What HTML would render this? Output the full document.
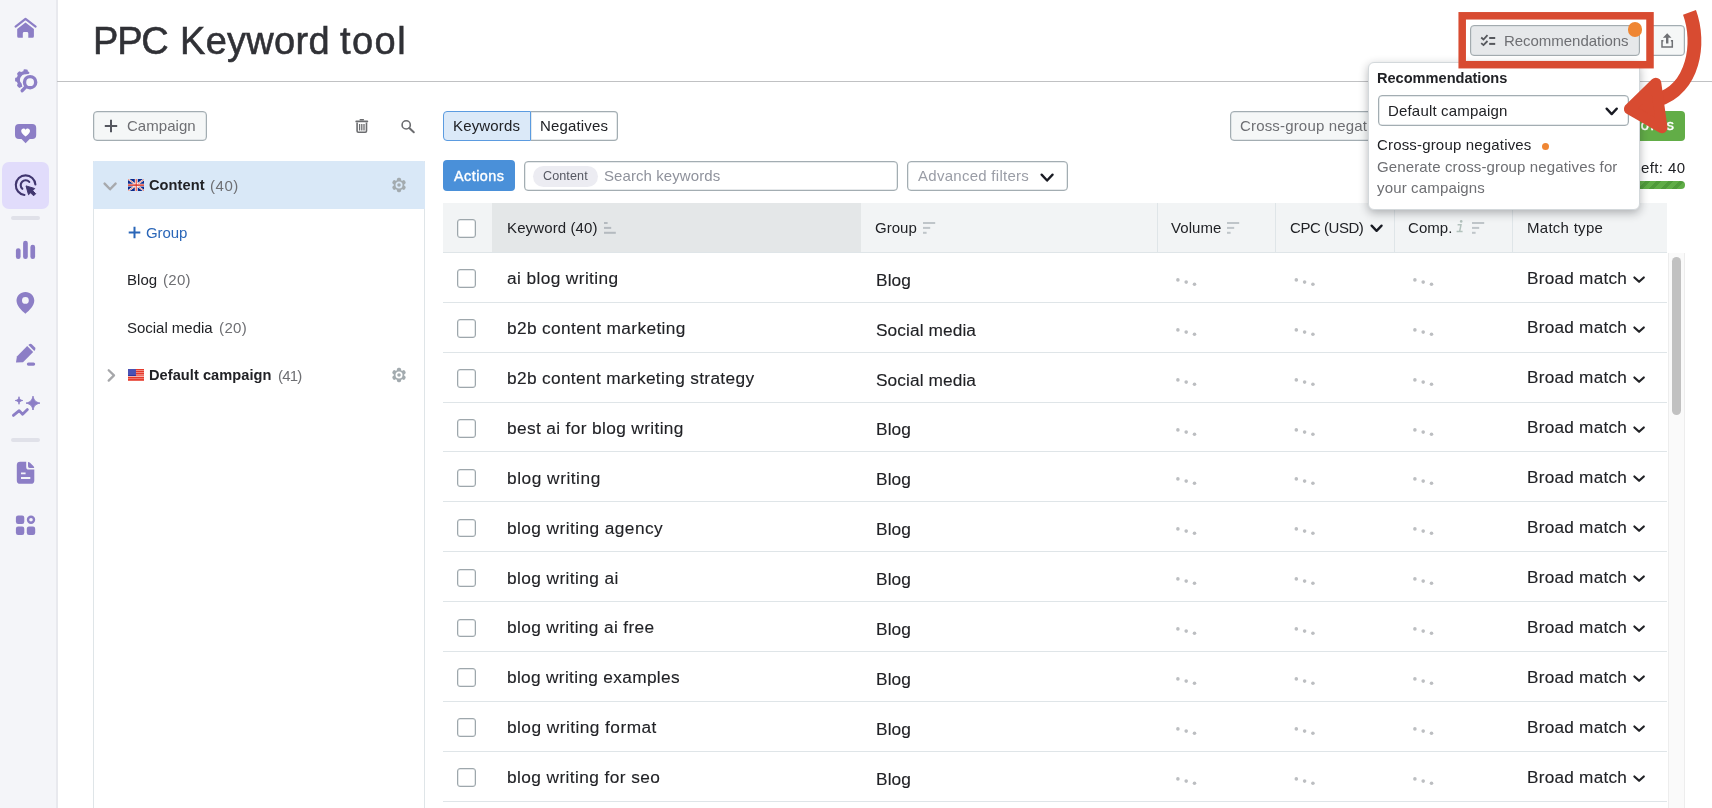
<!DOCTYPE html>
<html lang="en"><head><meta charset="utf-8"><title>PPC Keyword tool</title>
<style>
*{box-sizing:border-box;margin:0;padding:0}
html,body{width:1712px;height:808px;overflow:hidden;background:#fff}
.tx{will-change:transform}
body{font-family:"Liberation Sans",sans-serif;color:#212226;position:relative;font-size:15px}
span,div,svg{position:absolute;white-space:nowrap}
.tx{display:block}
#side{left:0;top:0;width:58px;height:808px;background:#f4f5f9;border-right:2px solid #e8e9ee}
#side .act{left:2px;top:162px;width:47px;height:47px;border-radius:7px;background:#e1dcfb}
#side .sep{left:11.3px;width:28.4px;height:3.2px;border-radius:2px;background:#e0e1e9}
#hline{left:57px;top:81px;width:1655px;height:1px;background:#c0c1c3}
.btn{border:1px solid #a3adb2;box-shadow:inset 0 0 0 .5px #cdd4d7;border-radius:4px;background:#f5f7f7}
#tree{left:93px;top:161px;width:332px;height:660px;border:1px solid #dfe5e8;border-top:none;background:#fff}
#treesel{left:93px;top:161px;width:332px;height:48px;background:#d9e8f7;border-radius:2px 2px 0 0}
#thead{left:443px;top:203px;width:1224px;height:50px;background:#f2f4f5;border-bottom:1px solid #dfe5e8}
#thead .kwh{left:49px;top:0;width:369px;height:49px;background:#e4e7e8}
#thead .vl{top:0;width:1px;height:49px;background:#dfe5e8}
.row{left:443px;width:1224px;height:49.91px;border-bottom:1px solid #dfe5e8}
.cb{width:18.6px;height:18.6px;border:1px solid #9ea7ac;border-radius:3px;background:#fff;box-shadow:inset 0 0 0 .5px #c9d0d3}
.mtc{left:1189px;top:21px}
.dots{top:25.1px;width:24px;height:10px}
.dots i{position:absolute;width:3.6px;height:3.6px;border-radius:50%;background:#bfc1c4}
.dots i:nth-child(1){left:.1px;top:0}
.dots i:nth-child(2){left:8.4px;top:2.2px}
.dots i:nth-child(3){left:16.7px;top:4.3px}

</style></head>
<body>
<div id="side">
  <div class="act"></div>
  <div class="sep" style="top:216.400px"></div>
  <div class="sep" style="top:438.400px"></div>
<svg style="left:0;top:0" width="57" height="808" viewBox="0 0 57 808">
 <g fill="#8c7ec6" stroke="none">
  <!-- home -->
  <path d="M15.6 26.6 L25.5 18.8 L35.6 26.6" fill="none" stroke="#8c7ec6" stroke-width="2.2" stroke-linecap="round" stroke-linejoin="round"/>
  <path d="M17.2 29 L25.5 22.4 L33.9 29 V36.3 Q33.9 37.8 32.4 37.8 H28.3 V33.4 Q28.3 32 26.9 32 H24.2 Q22.8 32 22.8 33.4 V37.8 H18.7 Q17.2 37.8 17.2 36.3 Z"/>
  <!-- gear + search -->
  <path d="M27.69 73.02 A7 7 0 0 0 21.28 85.33" fill="none" stroke="#8c7ec6" stroke-width="3.4" stroke-linecap="round"/>
  <rect x="23.10" y="69.40" width="4.4" height="4.6" rx="1.3" transform="rotate(2 25.3 79.6)"/><rect x="23.10" y="69.40" width="4.4" height="4.6" rx="1.3" transform="rotate(-45 25.3 79.6)"/><rect x="23.10" y="69.40" width="4.4" height="4.6" rx="1.3" transform="rotate(-90 25.3 79.6)"/><rect x="23.10" y="69.40" width="4.4" height="4.6" rx="1.3" transform="rotate(-135 25.3 79.6)"/>
  <circle cx="30.1" cy="82.2" r="8.7" fill="#f4f5f9"/>
  <circle cx="30.1" cy="82.2" r="5.6" fill="none" stroke="#8c7ec6" stroke-width="3.4"/>
  <path d="M25.8 86.8 L22.2 90.7" fill="none" stroke="#8c7ec6" stroke-width="3.4" stroke-linecap="round"/>
  <!-- heart bubble -->
  <path d="M19 123.900 H32.200 Q36.200 123.900 36.200 127.900 V135 Q36.200 139 32.200 139 H29.700 L25.600 143.300 L21.500 139 H19 Q15 139 15 135 V127.900 Q15 123.900 19 123.900 Z"/>
  <path d="M25.600 136.400 C22.700 134.200 21.200 132.700 21.200 130.900 C21.200 129.400 22.300 128.500 23.500 128.500 C24.400 128.500 25.100 128.900 25.600 129.800 C26.100 128.900 26.800 128.500 27.700 128.500 C28.900 128.500 30 129.400 30 130.900 C30 132.700 28.500 134.200 25.600 136.400 Z" fill="#fff"/>
  <!-- bars -->
  <rect x="15.9" y="248.2" width="4.7" height="10.8" rx="2.3"/>
  <rect x="23.1" y="240.8" width="4.7" height="18.2" rx="2.3"/>
  <rect x="30.4" y="244.8" width="4.7" height="14.2" rx="2.3"/>
  <!-- pin -->
  <path d="M25.4 291.9 C30.4 291.9 34.3 295.8 34.3 300.6 C34.3 305.6 29.6 310.4 25.4 313.8 C21.2 310.4 16.5 305.6 16.5 300.6 C16.5 295.8 20.4 291.9 25.4 291.9 Z M25.4 297 A3.4 3.4 0 1 0 25.4 303.8 A3.4 3.4 0 1 0 25.4 297 Z" fill-rule="evenodd"/>
  <!-- pencil -->
  <path d="M16 362.6 L16.9 356.4 L27.2 346.1 L33.2 352.1 L23 362.2 Z"/>
  <path d="M28.4 344.9 L29.2 344.2 Q30.6 343.2 32 344.4 L35 347.4 Q36 348.8 35 350.1 L34.3 350.9 Z"/>
  <rect x="26.8" y="362.4" width="8.4" height="3.4" rx="1.7"/>
  <!-- sparkle chart -->
  <path d="M33 396.2 C34 400.6 35.4 402 39.9 403.1 C35.400 404.2 34 405.600 33 410 C32 405.600 30.600 404.2 26.100 403.100 C30.600 402 32 400.600 33 396.2 Z" stroke="#8c7ec6" stroke-width="1" stroke-linejoin="round"/>
  <path d="M19 396.700 C19.500 399.300 20.200 400 22.800 400.500 C20.200 401 19.500 401.700 19 404.300 C18.500 401.700 17.800 401 15.200 400.500 C17.800 400 18.500 399.300 19 396.700 Z" stroke="#8c7ec6" stroke-width="0.800" stroke-linejoin="round"/>
  <path d="M13.4 415.400 L19.200 410.6 L22.6 414.2 L27.4 409.600" fill="none" stroke="#8c7ec6" stroke-width="2.800" stroke-linecap="round" stroke-linejoin="round"/>
  <!-- doc -->
  <path d="M20.200 461.700 H26.200 V467 Q26.200 469.600 28.800 469.600 H34.300 V480.400 Q34.300 483.800 30.900 483.800 H20.200 Q16.800 483.800 16.800 480.400 V465.100 Q16.800 461.700 20.200 461.700 Z M21 472.400 V474.300 H25.600 V472.400 Z M21 477 V478.900 H30.300 V477 Z" fill-rule="evenodd"/>
  <path d="M28 461.900 Q29.200 462 30 462.800 L33.300 466.100 Q34.100 466.900 34.200 467.900 H29.600 Q28 467.900 28 466.300 Z"/>
  <!-- apps -->
  <rect x="15.900" y="515.500" width="8.400" height="8.400" rx="2.200"/>
  <rect x="15.900" y="526.500" width="8.400" height="8.400" rx="2.200"/>
  <rect x="26.800" y="526.500" width="8.400" height="8.400" rx="2.200"/>
  <circle cx="31" cy="519.700" r="3" fill="none" stroke="#8c7ec6" stroke-width="2.400"/>
 </g>
 <!-- active target -->
 <g fill="none" stroke="#41366f" stroke-width="2.1" stroke-linecap="round">
  <path d="M24.41 194.93 A9.8 9.8 0 1 1 35.38 184.52"/>
  <path d="M22.32 188.84 A4.9 4.9 0 1 1 29.24 181.92"/>
 </g>
 <path d="M26 185.900 L34.700 188.500 L32.700 190.700 L35.700 193.700 L33.600 195.800 L30.600 192.800 L28.500 194.700 Z" fill="#41366f" stroke="#41366f" stroke-width="1" stroke-linejoin="round"/>
</svg>
</div>
<div id="hline"></div>

<!-- left column -->
<div class="btn" style="left:93px;top:110.500px;width:113.500px;height:30.500px"></div>
<svg style="left:104px;top:119px" width="14" height="14" viewBox="0 0 14 14"><path d="M7 0.800 V13.200 M0.800 7 H13.200" stroke="#55575f" stroke-width="2" fill="none"/></svg>
<!-- trash -->
<svg style="left:354px;top:118px" width="16" height="16" viewBox="0 0 16 16"><g fill="none" stroke="#6b6c6f"><path d="M6.300 1.800 H9.300" stroke-width="1.600" stroke-linecap="round"/><path d="M2.300 3.400 H13.300" stroke-width="1.900" stroke-linecap="round"/><path d="M3.100 4.600 V13 Q3.100 14.200 4.300 14.200 H11.300 Q12.500 14.200 12.500 13 V4.600" stroke-width="1.600"/><path d="M5.600 6 V12.400 M7.800 6 V12.400 M10 6 V12.400" stroke-width="1.300"/></g></svg>
<!-- search -->
<svg style="left:399px;top:118px" width="18" height="18" viewBox="0 0 18 18"><circle cx="7.200" cy="6.900" r="4.100" fill="none" stroke="#6b6c6f" stroke-width="1.600"/><path d="M10.300 10 L14.800 14.300" stroke="#6b6c6f" stroke-width="2" stroke-linecap="round"/></svg>
<div id="tree"></div>
<div id="treesel"></div>
<svg style="left:102.1px;top:180.6px" width="16.2" height="11.2" viewBox="-2 -2 16.2 11.2"><path d="M0.6 0.6 L6.1 6.3 L11.6 0.6" fill="none" stroke="#a7a9ad" stroke-width="2.400" stroke-linecap="round" stroke-linejoin="round"/></svg>
<!-- UK flag -->
<svg style="left:127.500px;top:179.200px" width="16.500" height="12.200" viewBox="0 0 60 44" preserveAspectRatio="none"><rect width="60" height="44" fill="#0a2a8c"/><path d="M0 0 L60 44 M60 0 L0 44" stroke="#fff" stroke-width="6.500"/><path d="M0 0 L60 44 M60 0 L0 44" stroke="#e0452f" stroke-width="2.200"/><path d="M30 0 V44 M0 22 H60" stroke="#fff" stroke-width="10.500"/><path d="M30 0 V44" stroke="#ee6a5a" stroke-width="5"/><path d="M0 22 H60" stroke="#d52b1e" stroke-width="5"/></svg>
<svg style="left:391.15px;top:177.2px" width="16" height="16" viewBox="-8 -8 16 16"><g fill="#a3abaf"><rect x="-2.1" y="-7.2" width="4.2" height="5" rx="1.6" transform="rotate(0)"/><rect x="-2.1" y="-7.2" width="4.2" height="5" rx="1.6" transform="rotate(60)"/><rect x="-2.1" y="-7.2" width="4.2" height="5" rx="1.6" transform="rotate(120)"/><rect x="-2.1" y="-7.2" width="4.2" height="5" rx="1.6" transform="rotate(180)"/><rect x="-2.1" y="-7.2" width="4.2" height="5" rx="1.6" transform="rotate(240)"/><rect x="-2.1" y="-7.2" width="4.2" height="5" rx="1.6" transform="rotate(300)"/><circle r="5.2"/></g><circle r="3.4" fill="none" stroke="#dce9f6" stroke-width="0"/><circle r="3.5" fill="#d9e8f7"/><circle r="1.8" fill="#a3abaf"/></svg>
<svg style="left:128px;top:226px" width="13" height="13" viewBox="0 0 13 13"><path d="M6.500 0.700 V12.300 M0.700 6.500 H12.300" stroke="#2a66b8" stroke-width="2" fill="none"/></svg>
<!-- chevron right -->
<svg style="left:105px;top:367px" width="12" height="16" viewBox="0 0 12 16"><path d="M3.700 3.200 L9 8.400 L3.700 13.600" fill="none" stroke="#a6a7aa" stroke-width="2.300" stroke-linecap="round" stroke-linejoin="round"/></svg>
<!-- US flag -->
<svg style="left:127.600px;top:369.100px" width="16.400" height="12.400" viewBox="0 0 33 24" preserveAspectRatio="none"><rect width="33" height="24" fill="#f39a90"/><g fill="#e5392c"><rect y="0" width="33" height="2.200"/><rect y="3.900" width="33" height="2.200"/><rect y="7.700" width="33" height="2.400"/><rect y="11.500" width="33" height="1.600"/><rect y="15.200" width="33" height="2.400"/><rect y="18.800" width="33" height="2.400"/><rect y="22.200" width="33" height="1.800"/></g><rect y="13.100" width="33" height="1.500" fill="#fbd5cf"/><rect width="16" height="13.200" fill="#4a52b4"/><rect y="11.800" width="16" height="1.400" fill="#1f2a9c"/></svg>
<svg style="left:391.15px;top:367.3px" width="16" height="16" viewBox="-8 -8 16 16"><g fill="#a3abaf"><rect x="-2.1" y="-7.2" width="4.2" height="5" rx="1.6" transform="rotate(0)"/><rect x="-2.1" y="-7.2" width="4.2" height="5" rx="1.6" transform="rotate(60)"/><rect x="-2.1" y="-7.2" width="4.2" height="5" rx="1.6" transform="rotate(120)"/><rect x="-2.1" y="-7.2" width="4.2" height="5" rx="1.6" transform="rotate(180)"/><rect x="-2.1" y="-7.2" width="4.2" height="5" rx="1.6" transform="rotate(240)"/><rect x="-2.1" y="-7.2" width="4.2" height="5" rx="1.6" transform="rotate(300)"/><circle r="5.2"/></g><circle r="3.4" fill="none" stroke="#dce9f6" stroke-width="0"/><circle r="3.5" fill="#ffffff"/><circle r="1.8" fill="#a3abaf"/></svg>

<!-- tabs -->
<div style="left:443px;top:110.500px;width:88px;height:30.500px;border:1px solid #5b9be0;border-radius:4px 0 0 4px;background:#dbe9f8"></div>
<div style="left:530.500px;top:110.500px;width:87.500px;height:30.500px;border:1px solid #a3adb2;box-shadow:inset 0 0 0 .5px #cdd4d7;border-left:none;border-radius:0 4px 4px 0;background:#fff"></div>

<!-- actions/search -->
<div style="left:443px;top:160px;width:72px;height:31px;border-radius:4px;background:#4a90d9"></div>
<div style="left:524.300px;top:160.500px;width:373.400px;height:30.500px;border:1px solid #a3adb2;box-shadow:inset 0 0 0 .5px #cdd4d7;border-radius:4px;background:#fff"></div>
<div style="left:532.800px;top:165.500px;width:65.500px;height:21px;border-radius:10.500px;background:#ececf2"></div>
<div style="left:907.300px;top:160.500px;width:160.400px;height:30.500px;border:1px solid #a3adb2;box-shadow:inset 0 0 0 .5px #cdd4d7;border-radius:4px;background:#fff"></div>
<svg style="left:1038.9px;top:171.7px" width="16.2" height="11.5" viewBox="-2 -2 16.2 11.5"><path d="M0.6 0.6 L6.1 6.6 L11.6 0.6" fill="none" stroke="#191b23" stroke-width="2.300" stroke-linecap="round" stroke-linejoin="round"/></svg>

<!-- right controls -->
<div class="btn" style="left:1230.200px;top:110.500px;width:170px;height:30.500px"></div>
<div style="left:1590px;top:110.500px;width:94.800px;height:30.400px;border-radius:4px;background:#62ad47"></div>
<div style="left:1560px;top:181px;width:124.700px;height:8.400px;border-radius:4.200px;background:repeating-linear-gradient(135deg,#5fad46 0 4.500px,#4f9b3a 4.500px 8px)"></div>

<!-- table -->
<div id="thead">
  <div class="kwh"></div>
  <span class="cb" style="left:14.4px;top:16.2px"></span>
  <div class="vl" style="left:713.500px"></div>
  <div class="vl" style="left:832px"></div>
  <div class="vl" style="left:950.500px"></div>
  <div class="vl" style="left:1069.300px"></div>
</div>
<svg style="left:604.3px;top:222.2px" width="13" height="12" viewBox="0 0 13 12"><g fill="#b4babf"><rect x="0" y="0" width="3.6" height="2"/><rect x="0" y="4.9" width="7.2" height="2"/><rect x="0" y="9.8" width="11.8" height="2"/></g></svg>
<svg style="left:923.3px;top:221.9px" width="13" height="12" viewBox="0 0 13 12"><g fill="#bfc5c9"><rect x="0" y="0" width="12.2" height="2"/><rect x="0" y="4.9" width="7.2" height="2"/><rect x="0" y="9.8" width="3.6" height="2"/></g></svg>
<svg style="left:1227px;top:222.2px" width="13" height="12" viewBox="0 0 13 12"><g fill="#bfc5c9"><rect x="0" y="0" width="12.2" height="2"/><rect x="0" y="4.9" width="7.2" height="2"/><rect x="0" y="9.8" width="3.6" height="2"/></g></svg>
<svg style="left:1369.3px;top:223.2px" width="15.2" height="10.8" viewBox="-2 -2 15.2 10.8"><path d="M0.6 0.6 L5.6 5.8999999999999995 L10.6 0.6" fill="none" stroke="#191b23" stroke-width="2.300" stroke-linecap="round" stroke-linejoin="round"/></svg>
<svg style="left:1455px;top:219px" width="10" height="15" viewBox="0 0 10 15"><circle cx="6.200" cy="2.400" r="1.300" fill="#b3c2bd"/><path d="M2.600 5.800 H6 L4.600 12.600 H7.400 M1.600 12.600 H7.600" fill="none" stroke="#b3c2bd" stroke-width="1.500"/></svg>
<svg style="left:1471.8px;top:222.2px" width="13" height="12" viewBox="0 0 13 12"><g fill="#bfc5c9"><rect x="0" y="0" width="12.2" height="2"/><rect x="0" y="4.9" width="7.2" height="2"/><rect x="0" y="9.8" width="3.6" height="2"/></g></svg>
<div class="row" style="top:252.80px"><span class="cb" style="left:14.4px;top:16.4px"></span>
<svg style="left:730px;top:22px" width="270" height="14" viewBox="0 0 270 14" fill="#bcbec1"><circle cx="4.9" cy="4.9" r="1.8"/><circle cx="13.2" cy="7.1" r="1.8"/><circle cx="21.5" cy="9.2" r="1.8"/><circle cx="123.3" cy="4.9" r="1.8"/><circle cx="131.6" cy="7.1" r="1.8"/><circle cx="139.9" cy="9.2" r="1.8"/><circle cx="241.9" cy="4.9" r="1.8"/><circle cx="250.2" cy="7.1" r="1.8"/><circle cx="258.5" cy="9.2" r="1.8"/></svg>
<svg class="mtc" width="14" height="10" viewBox="0 0 14 10"><path d="M2.4 3.5 L7.1 7.8 L11.8 3.5" fill="none" stroke="#212226" stroke-width="2.2" stroke-linecap="round" stroke-linejoin="round"/></svg></div>
<div class="row" style="top:302.71px"><span class="cb" style="left:14.4px;top:16.4px"></span>
<svg style="left:730px;top:22px" width="270" height="14" viewBox="0 0 270 14" fill="#bcbec1"><circle cx="4.9" cy="4.9" r="1.8"/><circle cx="13.2" cy="7.1" r="1.8"/><circle cx="21.5" cy="9.2" r="1.8"/><circle cx="123.3" cy="4.9" r="1.8"/><circle cx="131.6" cy="7.1" r="1.8"/><circle cx="139.9" cy="9.2" r="1.8"/><circle cx="241.9" cy="4.9" r="1.8"/><circle cx="250.2" cy="7.1" r="1.8"/><circle cx="258.5" cy="9.2" r="1.8"/></svg>
<svg class="mtc" width="14" height="10" viewBox="0 0 14 10"><path d="M2.4 3.5 L7.1 7.8 L11.8 3.5" fill="none" stroke="#212226" stroke-width="2.2" stroke-linecap="round" stroke-linejoin="round"/></svg></div>
<div class="row" style="top:352.62px"><span class="cb" style="left:14.4px;top:16.4px"></span>
<svg style="left:730px;top:22px" width="270" height="14" viewBox="0 0 270 14" fill="#bcbec1"><circle cx="4.9" cy="4.9" r="1.8"/><circle cx="13.2" cy="7.1" r="1.8"/><circle cx="21.5" cy="9.2" r="1.8"/><circle cx="123.3" cy="4.9" r="1.8"/><circle cx="131.6" cy="7.1" r="1.8"/><circle cx="139.9" cy="9.2" r="1.8"/><circle cx="241.9" cy="4.9" r="1.8"/><circle cx="250.2" cy="7.1" r="1.8"/><circle cx="258.5" cy="9.2" r="1.8"/></svg>
<svg class="mtc" width="14" height="10" viewBox="0 0 14 10"><path d="M2.4 3.5 L7.1 7.8 L11.8 3.5" fill="none" stroke="#212226" stroke-width="2.2" stroke-linecap="round" stroke-linejoin="round"/></svg></div>
<div class="row" style="top:402.53px"><span class="cb" style="left:14.4px;top:16.4px"></span>
<svg style="left:730px;top:22px" width="270" height="14" viewBox="0 0 270 14" fill="#bcbec1"><circle cx="4.9" cy="4.9" r="1.8"/><circle cx="13.2" cy="7.1" r="1.8"/><circle cx="21.5" cy="9.2" r="1.8"/><circle cx="123.3" cy="4.9" r="1.8"/><circle cx="131.6" cy="7.1" r="1.8"/><circle cx="139.9" cy="9.2" r="1.8"/><circle cx="241.9" cy="4.9" r="1.8"/><circle cx="250.2" cy="7.1" r="1.8"/><circle cx="258.5" cy="9.2" r="1.8"/></svg>
<svg class="mtc" width="14" height="10" viewBox="0 0 14 10"><path d="M2.4 3.5 L7.1 7.8 L11.8 3.5" fill="none" stroke="#212226" stroke-width="2.2" stroke-linecap="round" stroke-linejoin="round"/></svg></div>
<div class="row" style="top:452.44px"><span class="cb" style="left:14.4px;top:16.4px"></span>
<svg style="left:730px;top:22px" width="270" height="14" viewBox="0 0 270 14" fill="#bcbec1"><circle cx="4.9" cy="4.9" r="1.8"/><circle cx="13.2" cy="7.1" r="1.8"/><circle cx="21.5" cy="9.2" r="1.8"/><circle cx="123.3" cy="4.9" r="1.8"/><circle cx="131.6" cy="7.1" r="1.8"/><circle cx="139.9" cy="9.2" r="1.8"/><circle cx="241.9" cy="4.9" r="1.8"/><circle cx="250.2" cy="7.1" r="1.8"/><circle cx="258.5" cy="9.2" r="1.8"/></svg>
<svg class="mtc" width="14" height="10" viewBox="0 0 14 10"><path d="M2.4 3.5 L7.1 7.8 L11.8 3.5" fill="none" stroke="#212226" stroke-width="2.2" stroke-linecap="round" stroke-linejoin="round"/></svg></div>
<div class="row" style="top:502.35px"><span class="cb" style="left:14.4px;top:16.4px"></span>
<svg style="left:730px;top:22px" width="270" height="14" viewBox="0 0 270 14" fill="#bcbec1"><circle cx="4.9" cy="4.9" r="1.8"/><circle cx="13.2" cy="7.1" r="1.8"/><circle cx="21.5" cy="9.2" r="1.8"/><circle cx="123.3" cy="4.9" r="1.8"/><circle cx="131.6" cy="7.1" r="1.8"/><circle cx="139.9" cy="9.2" r="1.8"/><circle cx="241.9" cy="4.9" r="1.8"/><circle cx="250.2" cy="7.1" r="1.8"/><circle cx="258.5" cy="9.2" r="1.8"/></svg>
<svg class="mtc" width="14" height="10" viewBox="0 0 14 10"><path d="M2.4 3.5 L7.1 7.8 L11.8 3.5" fill="none" stroke="#212226" stroke-width="2.2" stroke-linecap="round" stroke-linejoin="round"/></svg></div>
<div class="row" style="top:552.26px"><span class="cb" style="left:14.4px;top:16.4px"></span>
<svg style="left:730px;top:22px" width="270" height="14" viewBox="0 0 270 14" fill="#bcbec1"><circle cx="4.9" cy="4.9" r="1.8"/><circle cx="13.2" cy="7.1" r="1.8"/><circle cx="21.5" cy="9.2" r="1.8"/><circle cx="123.3" cy="4.9" r="1.8"/><circle cx="131.6" cy="7.1" r="1.8"/><circle cx="139.9" cy="9.2" r="1.8"/><circle cx="241.9" cy="4.9" r="1.8"/><circle cx="250.2" cy="7.1" r="1.8"/><circle cx="258.5" cy="9.2" r="1.8"/></svg>
<svg class="mtc" width="14" height="10" viewBox="0 0 14 10"><path d="M2.4 3.5 L7.1 7.8 L11.8 3.5" fill="none" stroke="#212226" stroke-width="2.2" stroke-linecap="round" stroke-linejoin="round"/></svg></div>
<div class="row" style="top:602.17px"><span class="cb" style="left:14.4px;top:16.4px"></span>
<svg style="left:730px;top:22px" width="270" height="14" viewBox="0 0 270 14" fill="#bcbec1"><circle cx="4.9" cy="4.9" r="1.8"/><circle cx="13.2" cy="7.1" r="1.8"/><circle cx="21.5" cy="9.2" r="1.8"/><circle cx="123.3" cy="4.9" r="1.8"/><circle cx="131.6" cy="7.1" r="1.8"/><circle cx="139.9" cy="9.2" r="1.8"/><circle cx="241.9" cy="4.9" r="1.8"/><circle cx="250.2" cy="7.1" r="1.8"/><circle cx="258.5" cy="9.2" r="1.8"/></svg>
<svg class="mtc" width="14" height="10" viewBox="0 0 14 10"><path d="M2.4 3.5 L7.1 7.8 L11.8 3.5" fill="none" stroke="#212226" stroke-width="2.2" stroke-linecap="round" stroke-linejoin="round"/></svg></div>
<div class="row" style="top:652.08px"><span class="cb" style="left:14.4px;top:16.4px"></span>
<svg style="left:730px;top:22px" width="270" height="14" viewBox="0 0 270 14" fill="#bcbec1"><circle cx="4.9" cy="4.9" r="1.8"/><circle cx="13.2" cy="7.1" r="1.8"/><circle cx="21.5" cy="9.2" r="1.8"/><circle cx="123.3" cy="4.9" r="1.8"/><circle cx="131.6" cy="7.1" r="1.8"/><circle cx="139.9" cy="9.2" r="1.8"/><circle cx="241.9" cy="4.9" r="1.8"/><circle cx="250.2" cy="7.1" r="1.8"/><circle cx="258.5" cy="9.2" r="1.8"/></svg>
<svg class="mtc" width="14" height="10" viewBox="0 0 14 10"><path d="M2.4 3.5 L7.1 7.8 L11.8 3.5" fill="none" stroke="#212226" stroke-width="2.2" stroke-linecap="round" stroke-linejoin="round"/></svg></div>
<div class="row" style="top:701.99px"><span class="cb" style="left:14.4px;top:16.4px"></span>
<svg style="left:730px;top:22px" width="270" height="14" viewBox="0 0 270 14" fill="#bcbec1"><circle cx="4.9" cy="4.9" r="1.8"/><circle cx="13.2" cy="7.1" r="1.8"/><circle cx="21.5" cy="9.2" r="1.8"/><circle cx="123.3" cy="4.9" r="1.8"/><circle cx="131.6" cy="7.1" r="1.8"/><circle cx="139.9" cy="9.2" r="1.8"/><circle cx="241.9" cy="4.9" r="1.8"/><circle cx="250.2" cy="7.1" r="1.8"/><circle cx="258.5" cy="9.2" r="1.8"/></svg>
<svg class="mtc" width="14" height="10" viewBox="0 0 14 10"><path d="M2.4 3.5 L7.1 7.8 L11.8 3.5" fill="none" stroke="#212226" stroke-width="2.2" stroke-linecap="round" stroke-linejoin="round"/></svg></div>
<div class="row" style="top:751.90px"><span class="cb" style="left:14.4px;top:16.4px"></span>
<svg style="left:730px;top:22px" width="270" height="14" viewBox="0 0 270 14" fill="#bcbec1"><circle cx="4.9" cy="4.9" r="1.8"/><circle cx="13.2" cy="7.1" r="1.8"/><circle cx="21.5" cy="9.2" r="1.8"/><circle cx="123.3" cy="4.9" r="1.8"/><circle cx="131.6" cy="7.1" r="1.8"/><circle cx="139.9" cy="9.2" r="1.8"/><circle cx="241.9" cy="4.9" r="1.8"/><circle cx="250.2" cy="7.1" r="1.8"/><circle cx="258.5" cy="9.2" r="1.8"/></svg>
<svg class="mtc" width="14" height="10" viewBox="0 0 14 10"><path d="M2.4 3.5 L7.1 7.8 L11.8 3.5" fill="none" stroke="#212226" stroke-width="2.2" stroke-linecap="round" stroke-linejoin="round"/></svg></div>
<div style="left:1667.500px;top:253px;width:17px;height:555px;background:#fafafa;border-left:1px solid #ededed;border-right:1px solid #ededed"></div>
<div style="left:1672.200px;top:256.500px;width:9px;height:158.700px;border-radius:4.500px;background:#c1c1c1"></div>
<h1 style="position:absolute;left:0;top:0;width:0;height:0;font-weight:400;font-size:inherit"><span class="tx" style="top:21.93px;font-size:38px;line-height:38px;letter-spacing:-1.21px;color:#303136;left:93.21px;-webkit-text-stroke:.55px #303136;">PPC</span> <span class="tx" style="top:21.93px;font-size:38px;line-height:38px;letter-spacing:0.296px;color:#303136;left:179.61px;-webkit-text-stroke:.55px #303136;">Keyword</span> <span class="tx" style="top:21.93px;font-size:38px;line-height:38px;letter-spacing:1.446px;color:#303136;left:339.51px;-webkit-text-stroke:.55px #303136;">tool</span></h1>
<span class="tx" style="top:118.40px;font-size:15px;line-height:15px;letter-spacing:0.039px;color:#6e6f73;left:126.97px;">Campaign</span>
<span class="tx" style="top:177.84px;font-size:14.6px;line-height:14.6px;letter-spacing:0.081px;color:#212226;font-weight:700;left:148.60px;">Content</span>
<span class="tx" style="top:177.50px;font-size:15px;line-height:15px;letter-spacing:0.521px;color:#6e6f73;left:210.18px;">(40)</span>
<span class="tx" style="top:225.20px;font-size:15px;line-height:15px;letter-spacing:-0.088px;color:#2a66b8;left:146.18px;">Group</span>
<span class="tx" style="top:272.10px;font-size:15px;line-height:15px;letter-spacing:0.04px;color:#212226;left:126.88px;">Blog</span>
<span class="tx" style="top:272.10px;font-size:15px;line-height:15px;letter-spacing:0.288px;color:#6e6f73;left:163.38px;">(20)</span>
<span class="tx" style="top:320.30px;font-size:15px;line-height:15px;letter-spacing:-0.022px;color:#212226;left:126.88px;">Social media</span>
<span class="tx" style="top:320.30px;font-size:15px;line-height:15px;letter-spacing:0.388px;color:#6e6f73;left:218.68px;">(20)</span>
<span class="tx" style="top:368.14px;font-size:14.6px;line-height:14.6px;letter-spacing:0.052px;color:#212226;font-weight:700;left:148.60px;">Default campaign</span>
<span class="tx" style="top:367.80px;font-size:15px;line-height:15px;letter-spacing:-0.812px;color:#6e6f73;left:277.68px;">(41)</span>
<span class="tx" style="top:118.10px;font-size:15px;line-height:15px;letter-spacing:0.17px;color:#212226;left:453.18px;">Keywords</span>
<span class="tx" style="top:118.10px;font-size:15px;line-height:15px;letter-spacing:0.156px;color:#212226;left:539.57px;">Negatives</span>
<span class="tx" style="top:169.31px;font-size:14.4px;line-height:14.4px;letter-spacing:0.449px;color:#fff;left:454.11px;-webkit-text-stroke:.4px #fff;">Actions</span>
<span class="tx" style="top:169.83px;font-size:12.6px;line-height:12.6px;letter-spacing:0.087px;color:#565862;left:543.01px;">Content</span>
<span class="tx" style="top:168.30px;font-size:15px;line-height:15px;letter-spacing:0.078px;color:#8f929c;left:603.88px;">Search keywords</span>
<span class="tx" style="top:168.00px;font-size:15px;line-height:15px;letter-spacing:0.274px;color:#9a9da6;left:917.67px;">Advanced filters</span>
<span class="tx" style="top:220.00px;font-size:15px;line-height:15px;letter-spacing:0.122px;color:#212226;left:507.38px;">Keyword (40)</span>
<span class="tx" style="top:220.00px;font-size:15px;line-height:15px;letter-spacing:0.037px;color:#212226;left:875.47px;">Group</span>
<span class="tx" style="top:220.00px;font-size:15px;line-height:15px;letter-spacing:0.061px;color:#212226;left:1171.17px;">Volume</span>
<span class="tx" style="top:220.00px;font-size:15px;line-height:15px;letter-spacing:-0.456px;color:#212226;left:1289.58px;">CPC (USD)</span>
<span class="tx" style="top:220.00px;font-size:15px;line-height:15px;letter-spacing:0.066px;color:#212226;left:1408.38px;">Comp.</span>
<span class="tx" style="top:220.00px;font-size:15px;line-height:15px;letter-spacing:0.275px;color:#212226;left:1526.77px;">Match type</span>
<span class="tx" style="top:270.06px;font-size:17.3px;line-height:17.3px;letter-spacing:0.392px;color:#212226;left:506.55px;-webkit-text-stroke:.12px #212226;">ai blog writing</span>
<span class="tx" style="top:271.76px;font-size:17.3px;line-height:17.3px;letter-spacing:0.121px;color:#212226;left:875.75px;height:16.84px;overflow:hidden;-webkit-text-stroke:.12px #212226;">Blog</span>
<span class="tx" style="top:269.54px;font-size:17.2px;line-height:17.2px;letter-spacing:0.239px;color:#212226;left:1526.65px;-webkit-text-stroke:.12px #212226;">Broad match</span>
<span class="tx" style="top:319.97px;font-size:17.3px;line-height:17.3px;letter-spacing:0.368px;color:#212226;left:506.55px;-webkit-text-stroke:.12px #212226;">b2b content marketing</span>
<span class="tx" style="top:321.67px;font-size:17.3px;line-height:17.3px;letter-spacing:0.093px;color:#212226;left:875.75px;height:16.84px;overflow:hidden;-webkit-text-stroke:.12px #212226;">Social media</span>
<span class="tx" style="top:319.45px;font-size:17.2px;line-height:17.2px;letter-spacing:0.239px;color:#212226;left:1526.65px;-webkit-text-stroke:.12px #212226;">Broad match</span>
<span class="tx" style="top:369.88px;font-size:17.3px;line-height:17.3px;letter-spacing:0.337px;color:#212226;left:506.55px;-webkit-text-stroke:.12px #212226;">b2b content marketing strategy</span>
<span class="tx" style="top:371.58px;font-size:17.3px;line-height:17.3px;letter-spacing:0.093px;color:#212226;left:875.75px;height:16.84px;overflow:hidden;-webkit-text-stroke:.12px #212226;">Social media</span>
<span class="tx" style="top:369.36px;font-size:17.2px;line-height:17.2px;letter-spacing:0.239px;color:#212226;left:1526.65px;-webkit-text-stroke:.12px #212226;">Broad match</span>
<span class="tx" style="top:419.79px;font-size:17.3px;line-height:17.3px;letter-spacing:0.363px;color:#212226;left:506.55px;-webkit-text-stroke:.12px #212226;">best ai for blog writing</span>
<span class="tx" style="top:421.49px;font-size:17.3px;line-height:17.3px;letter-spacing:0.121px;color:#212226;left:875.75px;height:16.84px;overflow:hidden;-webkit-text-stroke:.12px #212226;">Blog</span>
<span class="tx" style="top:419.27px;font-size:17.2px;line-height:17.2px;letter-spacing:0.239px;color:#212226;left:1526.65px;-webkit-text-stroke:.12px #212226;">Broad match</span>
<span class="tx" style="top:469.70px;font-size:17.3px;line-height:17.3px;letter-spacing:0.53px;color:#212226;left:506.55px;-webkit-text-stroke:.12px #212226;">blog writing</span>
<span class="tx" style="top:471.40px;font-size:17.3px;line-height:17.3px;letter-spacing:0.121px;color:#212226;left:875.75px;height:16.84px;overflow:hidden;-webkit-text-stroke:.12px #212226;">Blog</span>
<span class="tx" style="top:469.18px;font-size:17.2px;line-height:17.2px;letter-spacing:0.239px;color:#212226;left:1526.65px;-webkit-text-stroke:.12px #212226;">Broad match</span>
<span class="tx" style="top:519.61px;font-size:17.3px;line-height:17.3px;letter-spacing:0.429px;color:#212226;left:506.55px;-webkit-text-stroke:.12px #212226;">blog writing agency</span>
<span class="tx" style="top:521.31px;font-size:17.3px;line-height:17.3px;letter-spacing:0.121px;color:#212226;left:875.75px;height:16.84px;overflow:hidden;-webkit-text-stroke:.12px #212226;">Blog</span>
<span class="tx" style="top:519.09px;font-size:17.2px;line-height:17.2px;letter-spacing:0.239px;color:#212226;left:1526.65px;-webkit-text-stroke:.12px #212226;">Broad match</span>
<span class="tx" style="top:569.52px;font-size:17.3px;line-height:17.3px;letter-spacing:0.413px;color:#212226;left:506.55px;-webkit-text-stroke:.12px #212226;">blog writing ai</span>
<span class="tx" style="top:571.22px;font-size:17.3px;line-height:17.3px;letter-spacing:0.121px;color:#212226;left:875.75px;height:16.84px;overflow:hidden;-webkit-text-stroke:.12px #212226;">Blog</span>
<span class="tx" style="top:569.00px;font-size:17.2px;line-height:17.2px;letter-spacing:0.239px;color:#212226;left:1526.65px;-webkit-text-stroke:.12px #212226;">Broad match</span>
<span class="tx" style="top:619.43px;font-size:17.3px;line-height:17.3px;letter-spacing:0.364px;color:#212226;left:506.55px;-webkit-text-stroke:.12px #212226;">blog writing ai free</span>
<span class="tx" style="top:621.13px;font-size:17.3px;line-height:17.3px;letter-spacing:0.121px;color:#212226;left:875.75px;height:16.84px;overflow:hidden;-webkit-text-stroke:.12px #212226;">Blog</span>
<span class="tx" style="top:618.91px;font-size:17.2px;line-height:17.2px;letter-spacing:0.239px;color:#212226;left:1526.65px;-webkit-text-stroke:.12px #212226;">Broad match</span>
<span class="tx" style="top:669.34px;font-size:17.3px;line-height:17.3px;letter-spacing:0.319px;color:#212226;left:506.55px;-webkit-text-stroke:.12px #212226;">blog writing examples</span>
<span class="tx" style="top:671.04px;font-size:17.3px;line-height:17.3px;letter-spacing:0.121px;color:#212226;left:875.75px;height:16.84px;overflow:hidden;-webkit-text-stroke:.12px #212226;">Blog</span>
<span class="tx" style="top:668.82px;font-size:17.2px;line-height:17.2px;letter-spacing:0.239px;color:#212226;left:1526.65px;-webkit-text-stroke:.12px #212226;">Broad match</span>
<span class="tx" style="top:719.25px;font-size:17.3px;line-height:17.3px;letter-spacing:0.454px;color:#212226;left:506.55px;-webkit-text-stroke:.12px #212226;">blog writing format</span>
<span class="tx" style="top:720.95px;font-size:17.3px;line-height:17.3px;letter-spacing:0.121px;color:#212226;left:875.75px;height:16.84px;overflow:hidden;-webkit-text-stroke:.12px #212226;">Blog</span>
<span class="tx" style="top:718.73px;font-size:17.2px;line-height:17.2px;letter-spacing:0.239px;color:#212226;left:1526.65px;-webkit-text-stroke:.12px #212226;">Broad match</span>
<span class="tx" style="top:769.16px;font-size:17.3px;line-height:17.3px;letter-spacing:0.411px;color:#212226;left:506.55px;-webkit-text-stroke:.12px #212226;">blog writing for seo</span>
<span class="tx" style="top:770.86px;font-size:17.3px;line-height:17.3px;letter-spacing:0.121px;color:#212226;left:875.75px;height:16.84px;overflow:hidden;-webkit-text-stroke:.12px #212226;">Blog</span>
<span class="tx" style="top:768.64px;font-size:17.2px;line-height:17.2px;letter-spacing:0.239px;color:#212226;left:1526.65px;-webkit-text-stroke:.12px #212226;">Broad match</span>
<span class="tx" style="top:118.30px;font-size:15px;line-height:15px;letter-spacing:0.171px;color:#6e6f73;left:1240.47px;">Cross-group negatives</span>
<span class="tx" style="top:118.17px;font-size:14.8px;line-height:14.8px;letter-spacing:1.462px;color:#fff;right:36.35px;-webkit-text-stroke:.45px #fff;">Add keywords</span>
<span class="tx" style="top:160.30px;font-size:15px;line-height:15px;letter-spacing:0.408px;color:#212226;right:26.79px;">Keywords <span style="position:static;margin-right:2.5px">l</span>eft: 40</span>

<!-- header right buttons -->
<div class="btn" style="left:1470.200px;top:25.200px;width:169.600px;height:30.500px;background:#e6e8ea;border-color:#a3abaf"></div>
<svg style="left:1480px;top:33px" width="18" height="15" viewBox="0 0 18 15"><g fill="none" stroke="#56585d" stroke-width="1.800"><path d="M1.200 4.500 L3.500 6.500 L7.500 2.200"/><path d="M1.200 10.100 L3.500 12.100 L7.500 8"/></g><rect x="9.200" y="4" width="6" height="2" fill="#56585d"/><rect x="9.200" y="9.900" width="6" height="2" fill="#56585d"/></svg>
<div class="btn" style="left:1647px;top:25.200px;width:37.800px;height:30.500px"></div>
<svg style="left:1659px;top:32px" width="16" height="17" viewBox="0 0 16 17"><path d="M8.200 1.200 L3.900 5.800 H7 V11.500 H9.400 V5.800 H12.500 Z" fill="#6f7175"/><path d="M4.400 8.700 H3 V14.900 H13.300 V8.700 H11.900" fill="none" stroke="#6f7175" stroke-width="1.500"/></svg>
<div style="left:1628px;top:22.300px;width:14.400px;height:14.400px;border-radius:50%;background:#ef8633"></div>

<!-- popover -->
<div style="left:1368px;top:62px;width:272px;height:148px;border-radius:6px;background:#fff;border:1px solid #d3d8db;box-shadow:0 3px 10px rgba(25,27,35,.32)"></div>
<div style="left:1378.200px;top:95.100px;width:250.400px;height:30.500px;border:1px solid #a3adb2;box-shadow:inset 0 0 0 .5px #cdd4d7;border-radius:4px;background:#fff"></div>
<svg style="left:1604px;top:106.3px" width="15.4" height="11" viewBox="-2 -2 15.4 11"><path d="M0.6 0.6 L5.7 6.1 L10.8 0.6" fill="none" stroke="#191b23" stroke-width="2.300" stroke-linecap="round" stroke-linejoin="round"/></svg>
<div style="left:1541.600px;top:142.600px;width:7px;height:7px;border-radius:50%;background:#ef8633"></div>
<span class="tx" style="top:32.80px;font-size:15px;line-height:15px;letter-spacing:-0.037px;color:#6e6f73;left:1504.38px;">Recommendations</span>
<span class="tx" style="top:70.64px;font-size:14.6px;line-height:14.6px;letter-spacing:-0.018px;color:#212226;font-weight:700;left:1377.40px;">Recommendations</span>
<span class="tx" style="top:102.90px;font-size:15px;line-height:15px;letter-spacing:0.174px;color:#212226;left:1387.97px;">Default campaign</span>
<span class="tx" style="top:137.00px;font-size:15px;line-height:15px;letter-spacing:0.171px;color:#212226;left:1377.38px;">Cross-group negatives</span>
<span class="tx" style="top:158.90px;font-size:15px;line-height:15px;letter-spacing:0.133px;color:#6e6f73;left:1377.38px;">Generate cross-group negatives for</span>
<span class="tx" style="top:180.00px;font-size:15px;line-height:15px;letter-spacing:0.151px;color:#6e6f73;left:1377.38px;">your campaigns</span>

<!-- annotation -->
<svg style="left:0;top:0" width="1712" height="808" viewBox="0 0 1712 808">
  <rect x="1462.200" y="15.800" width="187.800" height="48.900" fill="none" stroke="#d84b31" stroke-width="7.500"/>
  <path d="M1689.500 12.300 C1700.900 43.100 1693.500 88.800 1658 99.600" fill="none" stroke="#d84b31" stroke-width="13.800"/>
  <path d="M1629.400 109 L1655.800 83.200 L1662 127.800 Z" fill="#d84b31" stroke="#d84b31" stroke-width="11" stroke-linejoin="round"/>
</svg>

</body></html>
